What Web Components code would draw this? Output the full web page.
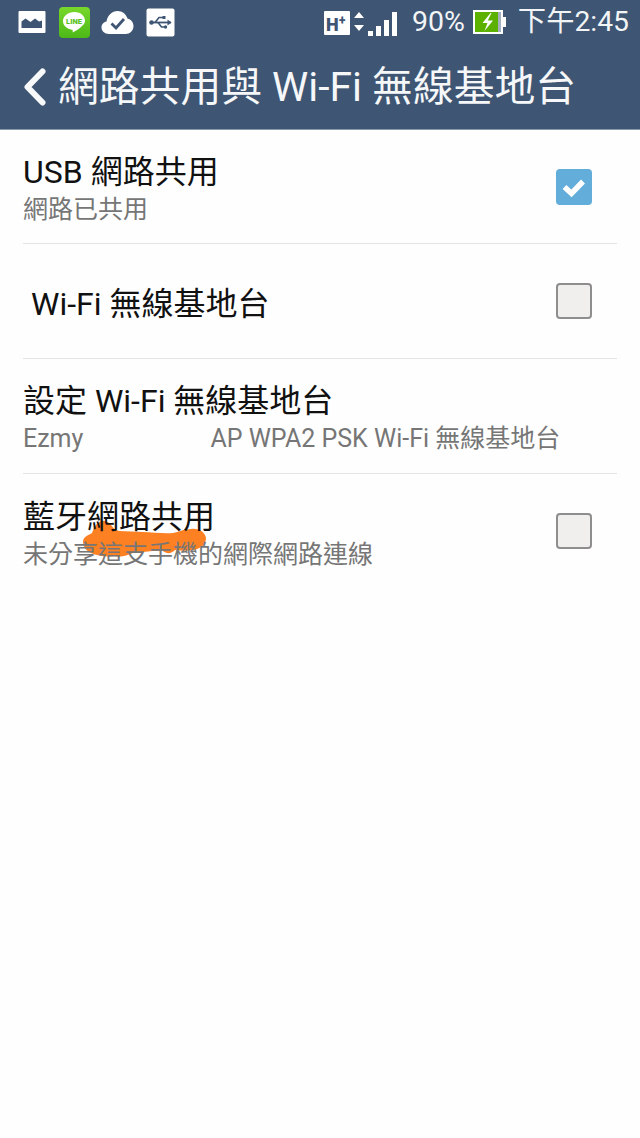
<!DOCTYPE html>
<html lang="zh-Hant">
<head>
<meta charset="utf-8">
<title>網路共用與 Wi-Fi 無線基地台</title>
<style>
  html, body { margin: 0; padding: 0; background: #fefefe; }
  body { width: 640px; height: 1138px; overflow: hidden; font-family: Roboto, "Noto Sans CJK TC", sans-serif; }
</style>
</head>
<body>
<status-bar></status-bar>
<app-header>網路共用與 Wi-Fi 無線基地台</app-header>
<setting-list>
  <setting-row title="USB 網路共用" checkbox="on"><span>網路已共用</span></setting-row>
  <setting-row title="Wi-Fi 無線基地台" checkbox="off" indent></setting-row>
  <setting-row title="設定 Wi-Fi 無線基地台"><span>Ezmy</span><scribble-mark></scribble-mark><span>AP WPA2 PSK Wi-Fi 無線基地台</span></setting-row>
  <setting-row title="藍牙網路共用" checkbox="off" last><span>未分享這支手機的網際網路連線</span></setting-row>
</setting-list>

<script>
class StatusBar extends HTMLElement {
  constructor() {
    super();
    this.attachShadow({ mode: "open" });
    this.shadowRoot.innerHTML = `
      <style>
        :host { display: flex; align-items: center; height: 44px; background: #3e5573; color: #f2f4f6; padding: 0 11px 0 18px; box-sizing: border-box; font-family: Roboto, "Noto Sans CJK TC", sans-serif; }
        svg { display: block; flex: none; }
        .left { display: flex; align-items: center; }
        .right { display: flex; align-items: center; margin-left: auto; }
        .pct { font-size: 28.5px; margin-left: 15px; line-height: 44px; }
        .time { font-size: 28.3px; margin-left: 12px; line-height: 44px; white-space: nowrap; }
      </style>
      <div class="left">
        <svg width="28" height="24" viewBox="0 0 28 24" style="margin-right:13px">
          <rect x="0.5" y="1" width="27" height="22" rx="1" fill="#fff"/>
          <path d="M3.5 18V11.5l4-3 5 3.5 4.5-3.5 4 3 3 -1V18z" fill="#3e5573"/>
          <rect x="3" y="4.5" width="22" height="2" fill="#fff"/>
        </svg>
        <svg width="31" height="31" viewBox="0 0 31 31" style="margin-right:11px">
          <defs><linearGradient id="lg" x1="0" y1="0" x2="0" y2="1"><stop offset="0" stop-color="#78d82a"/><stop offset="1" stop-color="#4cb818"/></linearGradient></defs>
          <rect x="0" y="0" width="31" height="31" rx="4" fill="url(#lg)"/>
          <path d="M15.5 5C9 5 4 9 4 14c0 4.5 3.8 8 9 8.8 1 .2 .8 1.2 .6 2.7 2.8-1.3 7-4 9.4-6.5 2-2 3-3.2 3-5C26 9 22 5 15.5 5z" fill="#fff"/>
          <text x="15" y="17" text-anchor="middle" font-size="7.5" font-weight="900" fill="#58c21e" font-family="Roboto, sans-serif">LINE</text>
        </svg>
        <svg width="33" height="28" viewBox="0 0 33 28" style="margin-right:12px">
          <path d="M8 26C3.5 26 .5 23 .5 19.5c0-3.2 2.3-5.5 5-6C6.5 7.5 11 3 16.5 3c5 0 8.5 3 10 7.5 3.5 .8 6 3.8 6 7.5 0 4.5-3.5 8-8 8z" fill="#fff"/>
          <path d="M10.5 15.5l4.500 4.500 8-9" fill="none" stroke="#3e5573" stroke-width="2.8"/>
        </svg>
        <svg width="29" height="29" viewBox="0 0 29 29">
          <rect x="0.5" y="0.5" width="28" height="28" rx="2" fill="#fff"/>
          <path d="M4.5 14.5H25" stroke="#3e5573" stroke-width="1.8"/>
          <circle cx="5.5" cy="14.5" r="2.3" fill="#3e5573"/>
          <path d="M9 14.5l4-5h4M12 14.5l3.5 4.5h3" fill="none" stroke="#3e5573" stroke-width="1.6"/>
          <path d="M21.5 11.5l4 3-4 3z" fill="#3e5573"/>
          <rect x="16.5" y="8" width="3" height="3" fill="#3e5573"/>
          <circle cx="19.5" cy="19" r="1.7" fill="#3e5573"/>
        </svg>
      </div>
      <div class="right">
        <svg width="73" height="30" viewBox="0 0 73 30">
          <rect x="0" y="4" width="26" height="24" rx="1" fill="#fff"/>
          <text x="2" y="24" font-size="18" font-weight="900" fill="#3e5573" font-family="Roboto, sans-serif">H</text>
          <text x="15" y="17" font-size="12" font-weight="900" fill="#3e5573" font-family="Roboto, sans-serif">+</text>
          <path d="M30 11l5-6 5 6zM30 18h10l-5 6z" fill="#fff"/>
          <rect x="44" y="24" width="5" height="5" fill="#fff"/>
          <rect x="52" y="19" width="5" height="10" fill="#fff"/>
          <rect x="60" y="13" width="5" height="16" fill="#fff"/>
          <rect x="68" y="5" width="5" height="24" fill="#fff"/>
        </svg>
        <span class="pct">90%</span>
        <svg width="33" height="24" viewBox="0 0 33 24" style="margin-left:8px">
          <rect x="0" y="0" width="30" height="24" fill="#fff"/>
          <rect x="2" y="2" width="26" height="20" fill="#a6b0bf"/>
          <rect x="2" y="2" width="23" height="20" fill="#5cb000"/>
          <rect x="30" y="7" width="3" height="10" fill="#fff"/>
          <path d="M17.5 3l-8 10h5l-3 8 8.5-10.500h-5.200l3.700-7.500z" fill="#fff"/>
        </svg>
        <span class="time">下午2:45</span>
      </div>`;
  }
}
customElements.define("status-bar", StatusBar);

class AppHeader extends HTMLElement {
  constructor() {
    super();
    this.attachShadow({ mode: "open" });
    this.shadowRoot.innerHTML = `
      <style>
        :host { display: flex; align-items: center; height: 86px; background: #3e5573; color: #f5f7f9; box-sizing: border-box; border-bottom: 1px solid #8a98ab; padding: 0 0 0 23px; font-family: Roboto, "Noto Sans CJK TC", sans-serif; font-size: 40.8px; }
        svg { display: block; flex: none; margin-right: 11px; margin-top: 1px; }
        .t { line-height: 86px; white-space: nowrap; padding-top: 1px; }
      </style>
      <svg width="24" height="38" viewBox="0 0 24 38"><path d="M19.5 3.5L4.5 19l15 15.5" fill="none" stroke="#f8f9fa" stroke-width="6" stroke-linecap="round" stroke-linejoin="round"/></svg>
      <div class="t"><slot></slot></div>`;
  }
}
customElements.define("app-header", AppHeader);

class SettingList extends HTMLElement {
  constructor() {
    super();
    this.attachShadow({ mode: "open" });
    this.shadowRoot.innerHTML = `
      <style>:host { display: flex; flex-direction: column; padding: 0 23px; background: #fefefe; }</style>
      <slot></slot>`;
  }
}
customElements.define("setting-list", SettingList);

class CheckBox extends HTMLElement {
  constructor() {
    super();
    this.attachShadow({ mode: "open" });
    this.shadowRoot.innerHTML = `
      <style>
        :host { display: block; width: 36px; height: 36px; box-sizing: border-box; border-radius: 4px; background: #f0efee; border: 2px solid #8e8e8e; }
        :host([checked]) { background: #62add9; border: none; }
        svg { display: none; }
        :host([checked]) svg { display: block; }
      </style>
      <svg width="36" height="36" viewBox="0 0 36 36"><path d="M8.5 18l7 6.5L27 12.5" fill="none" stroke="#fff" stroke-width="5.5"/></svg>`;
  }
}
customElements.define("check-box", CheckBox);

class SettingRow extends HTMLElement {
  constructor() {
    super();
    const root = this.attachShadow({ mode: "open" });
    const title = this.getAttribute("title") || "";
    const cb = this.getAttribute("checkbox");
    root.innerHTML = `
      <style>
        :host { display: flex; align-items: center; height: 115px; box-sizing: border-box; border-bottom: 1px solid #e4e4e4; font-family: Roboto, "Noto Sans CJK TC", sans-serif; }
        :host([last]) { border-bottom: none; }
        :host([last]) check-box { margin-top: -1px; }
        :host(:first-child) { height: 114px; }
        .text { flex: 1; min-width: 0; padding-top: 5px; }
        .title { font-size: 32px; line-height: 40px; color: #111; white-space: pre; }
        :host([indent]) .title { padding-left: 8px; }
        .sub { font-size: 25px; line-height: 34px; margin-top: 1px; color: #767676; white-space: pre; display: flex; align-items: center; }
        check-box { margin-right: 25px; flex: none; }
      </style>
      <div class="text">
        <div class="title"></div>
        <div class="sub"><slot></slot></div>
      </div>
      ${cb ? `<check-box ${cb === "on" ? "checked" : ""}></check-box>` : ""}`;
    root.querySelector(".title").textContent = title;
    if (!this.childElementCount) root.querySelector(".sub").remove();
  }
}
customElements.define("setting-row", SettingRow);

class ScribbleMark extends HTMLElement {
  constructor() {
    super();
    this.attachShadow({ mode: "open" });
    this.shadowRoot.innerHTML = `
      <style>
        :host { display: block; width: 123px; height: 34px; flex: none; margin-right: 4px; }
        svg { display: block; overflow: visible; }
      </style>
      <svg width="123" height="34" viewBox="0 0 123 34">
        <path d="M0 17C1 12 6 11 9 9C11 4 13 -1 18 -3C22 -4 26 -2 28 1C30 4 32 6 36 7L60 8C70 8 80 10 90 9C96 8 100 5 108 5C116 4 122 8 123 14C123 20 118 25 110 26C104 27 98 27 92 26C88 30 84 30 80 27C70 26 60 29 50 29C44 31 38 34 32 32C24 33 14 32 8 29C3 27 0 22 0 17Z" fill="#fd8023"/>
      </svg>`;
  }
}
customElements.define("scribble-mark", ScribbleMark);
</script>
</body>
</html>
